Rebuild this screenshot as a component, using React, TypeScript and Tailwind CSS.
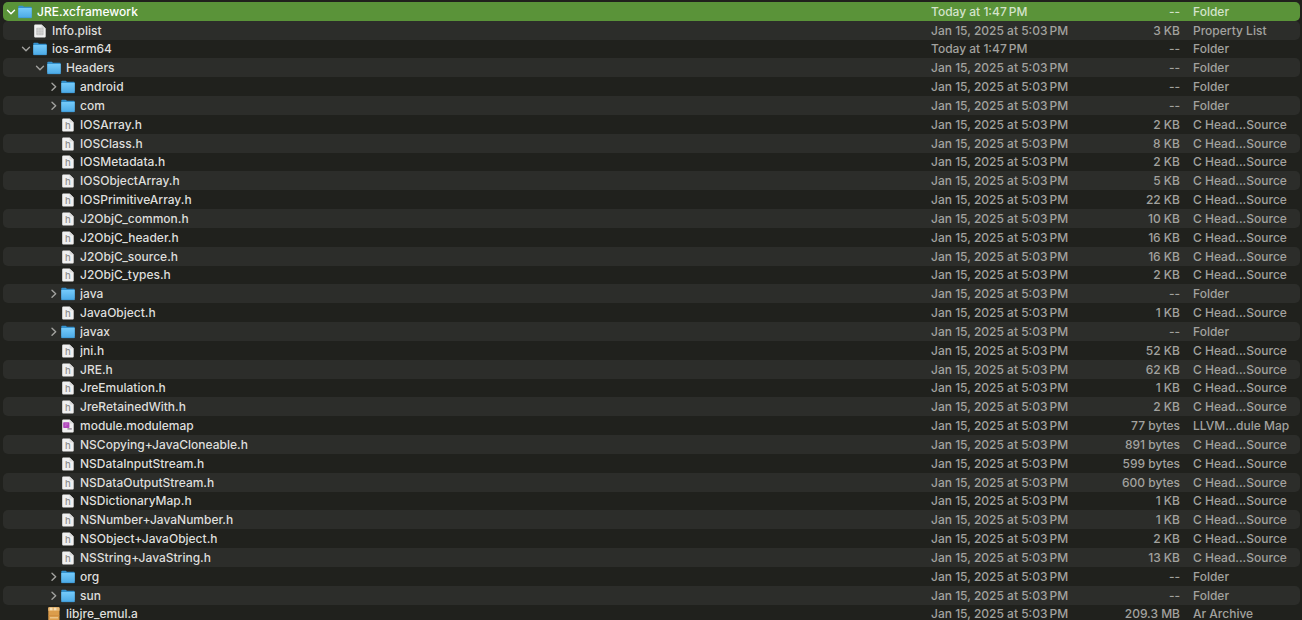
import React from "react";

type IconKind = "folder" | "plist" | "header" | "module" | "archive";

interface Entry {
  name: string;
  level: 0 | 1 | 2 | 3;
  icon: IconKind;
  size: string;
  kind: string;
  date: string;
  open?: boolean;
}

const BUILD_DATE = "Jan 15, 2025 at 5:03\u202fPM";
const TODAY = "Today at 1:47\u202fPM";

const folder = (name: string, level: Entry["level"], open = false, date = BUILD_DATE): Entry => ({
  name,
  level,
  icon: "folder",
  size: "--",
  kind: "Folder",
  date,
  open,
});

const header = (name: string, size: string): Entry => ({
  name,
  level: 3,
  icon: "header",
  size,
  kind: "C Head...Source",
  date: BUILD_DATE,
});

const entries: Entry[] = [
  folder("JRE.xcframework", 0, true, TODAY),
  { name: "Info.plist", level: 1, icon: "plist", size: "3 KB", kind: "Property List", date: BUILD_DATE },
  folder("ios-arm64", 1, true, TODAY),
  folder("Headers", 2, true),
  folder("android", 3),
  folder("com", 3),
  header("IOSArray.h", "2 KB"),
  header("IOSClass.h", "8 KB"),
  header("IOSMetadata.h", "2 KB"),
  header("IOSObjectArray.h", "5 KB"),
  header("IOSPrimitiveArray.h", "22 KB"),
  header("J2ObjC_common.h", "10 KB"),
  header("J2ObjC_header.h", "16 KB"),
  header("J2ObjC_source.h", "16 KB"),
  header("J2ObjC_types.h", "2 KB"),
  folder("java", 3),
  header("JavaObject.h", "1 KB"),
  folder("javax", 3),
  header("jni.h", "52 KB"),
  header("JRE.h", "62 KB"),
  header("JreEmulation.h", "1 KB"),
  header("JreRetainedWith.h", "2 KB"),
  { name: "module.modulemap", level: 3, icon: "module", size: "77 bytes", kind: "LLVM...dule Map", date: BUILD_DATE },
  header("NSCopying+JavaCloneable.h", "891 bytes"),
  header("NSDataInputStream.h", "599 bytes"),
  header("NSDataOutputStream.h", "600 bytes"),
  header("NSDictionaryMap.h", "1 KB"),
  header("NSNumber+JavaNumber.h", "1 KB"),
  header("NSObject+JavaObject.h", "2 KB"),
  header("NSString+JavaString.h", "13 KB"),
  folder("org", 3),
  folder("sun", 3),
  { name: "libjre_emul.a", level: 2, icon: "archive", size: "209.3 MB", kind: "Ar Archive", date: BUILD_DATE },
];

const indent = {
  0: "pl-[2px]",
  1: "pl-[17px]",
  2: "pl-[31px]",
  3: "pl-[45px]",
};

function Chevron({ open }: { open: boolean }) {
  return (
    <svg viewBox="0 0 12 12" className="size-3" fill="none" stroke="currentColor" strokeWidth="1.4" strokeLinecap="round" strokeLinejoin="round" aria-hidden="true">
      <path d={open ? "M2.5 4.3 6 7.8l3.5-3.5" : "M4 2.3 7.7 5.8 4 9.3"} />
    </svg>
  );
}

function Page({ children }: { children?: React.ReactNode }) {
  return (
    <svg viewBox="0 0 14 14" className="size-3.5 shrink-0" aria-hidden="true">
      <path d="M2.2 0.4h6.3l4.2 4v8.2a1 1 0 0 1-1 1H2.2a1 1 0 0 1-1-1V1.4a1 1 0 0 1 1-1z" fill="#f0f0f0" />
      <path d="M8.5 0.4v3a1 1 0 0 0 1 1h3.2z" fill="#d8d8d8" />
      {children}
    </svg>
  );
}

function FileIcon({ kind }: { kind: IconKind }) {
  if (kind === "folder") {
    return (
      <svg viewBox="0 0 14 14" className="size-3.5 shrink-0" aria-hidden="true">
        <defs>
          <linearGradient id="folder-front" x1="0" y1="0" x2="0" y2="1">
            <stop offset="0" stopColor="#75cafa" />
            <stop offset="1" stopColor="#4ba9e5" />
          </linearGradient>
        </defs>
        <path d="M0.3 1.5a0.8 0.8 0 0 1 .8-.8h3.6l1.3 1.1h6.9a0.8 0.8 0 0 1 .8.8v9H0.3z" fill="#3491cd" />
        <path d="M0.3 3.1h13.4v9.3a0.7 0.7 0 0 1-.7.7H1a0.7 0.7 0 0 1-.7-.7z" fill="url(#folder-front)" />
        <path d="M0.6 12.7h12.8" stroke="#3c96d2" strokeWidth="0.7" />
      </svg>
    );
  }
  if (kind === "archive") {
    return (
      <svg viewBox="0 0 14 14" className="size-3.5 shrink-0" aria-hidden="true">
        <rect x="1.3" y="0.2" width="11.2" height="13.8" rx="0.8" fill="#dc9d4b" />
        <path d="M1.3 1a.8.8 0 0 1 .8-.8h9.6a.8.8 0 0 1 .8.8v2.8H1.3z" fill="#eabb78" />
        <path d="M3 0.8h2.4v2.4H3zM7 0.8h2.4v2.4H7z" fill="#f6dfb6" />
        <path d="M1.3 8.6h11.2" stroke="#c9873a" strokeWidth="0.6" />
        <path d="M3 10.8h8" stroke="#f0cd95" strokeWidth="1.2" />
      </svg>
    );
  }
  if (kind === "plist") {
    return (
      <Page>
        <rect x="3.2" y="3.8" width="7.4" height="7.4" rx="1" fill="#c4c4c4" />
        <path d="M3.2 6.2h7.4M3.2 8.6h7.4M5.7 3.8v7.4M8.2 3.8v7.4" stroke="#d9d9d9" strokeWidth="0.5" />
      </Page>
    );
  }
  if (kind === "module") {
    return (
      <Page>
        <rect x="2.2" y="3.2" width="6.2" height="5.8" rx="0.8" fill="#ae45b9" />
        <path d="M3.7 5h3.2M3.7 6.8h1.8" stroke="#d58edc" strokeWidth="0.7" />
        <path d="M6.4 9.9h4.4" stroke="#8d8390" strokeWidth="1.3" fill="none" />
      </Page>
    );
  }
  return (
    <Page>
      <text x="6.9" y="11.2" textAnchor="middle" fontSize="9.5" fontWeight="500" fill="#8f8f8f">
        h
      </text>
    </Page>
  );
}

function Row({ entry, selected }: { entry: Entry; selected: boolean }) {
  const fill = selected ? "[&>td]:bg-[#5a9339]" : "even:[&>td]:bg-[#2c2d2a]";
  const detail = selected ? "text-[#d4e3cb]" : "text-[#a2a29f]";
  return (
    <tr
      aria-selected={selected}
      className={`h-[19px] nth-[6n+3]:h-[18px] [&>td:first-child]:rounded-l-[5px] [&>td:last-child]:rounded-r-[5px] ${fill}`}
    >
      <td className="p-0">
        <div className={`flex h-[18px] items-center ${indent[entry.level]} ${selected ? "text-white" : "text-[#dededc]"}`}>
          {entry.icon === "folder" ? (
            <button
              type="button"
              aria-expanded={entry.open}
              aria-label={`Toggle ${entry.name}`}
              className={`mr-px flex w-3 shrink-0 items-center justify-center ${selected ? "text-white" : "text-[#a2a29f]"}`}
            >
              <Chevron open={Boolean(entry.open)} />
            </button>
          ) : (
            <span className="mr-px w-3 shrink-0" />
          )}
          <FileIcon kind={entry.icon} />
          <span className="ml-[5px] truncate">{entry.name}</span>
        </div>
      </td>
      <td className={`p-0 ${detail}`}>{entry.date}</td>
      <td className={`p-0 text-right ${detail}`}>{entry.size}</td>
      <td className={`p-0 pl-[13px] ${detail}`}>{entry.kind}</td>
    </tr>
  );
}

export default function App() {
  return (
    <main className="h-screen overflow-y-auto bg-[#20211d] pt-[2px] pr-[2px] pl-[3px] font-['Inter','Liberation_Sans',sans-serif] text-[12px] leading-[18px] font-medium whitespace-nowrap [scrollbar-width:none]">
      <table aria-label="Files" className="w-full table-fixed border-separate border-spacing-0">
        <colgroup>
          <col />
          <col className="w-[148px]" />
          <col className="w-[101px]" />
          <col className="w-[120px]" />
        </colgroup>
        <tbody>
          {entries.map((entry, index) => (
            <Row key={entry.name} entry={entry} selected={index === 0} />
          ))}
        </tbody>
      </table>
    </main>
  );
}
